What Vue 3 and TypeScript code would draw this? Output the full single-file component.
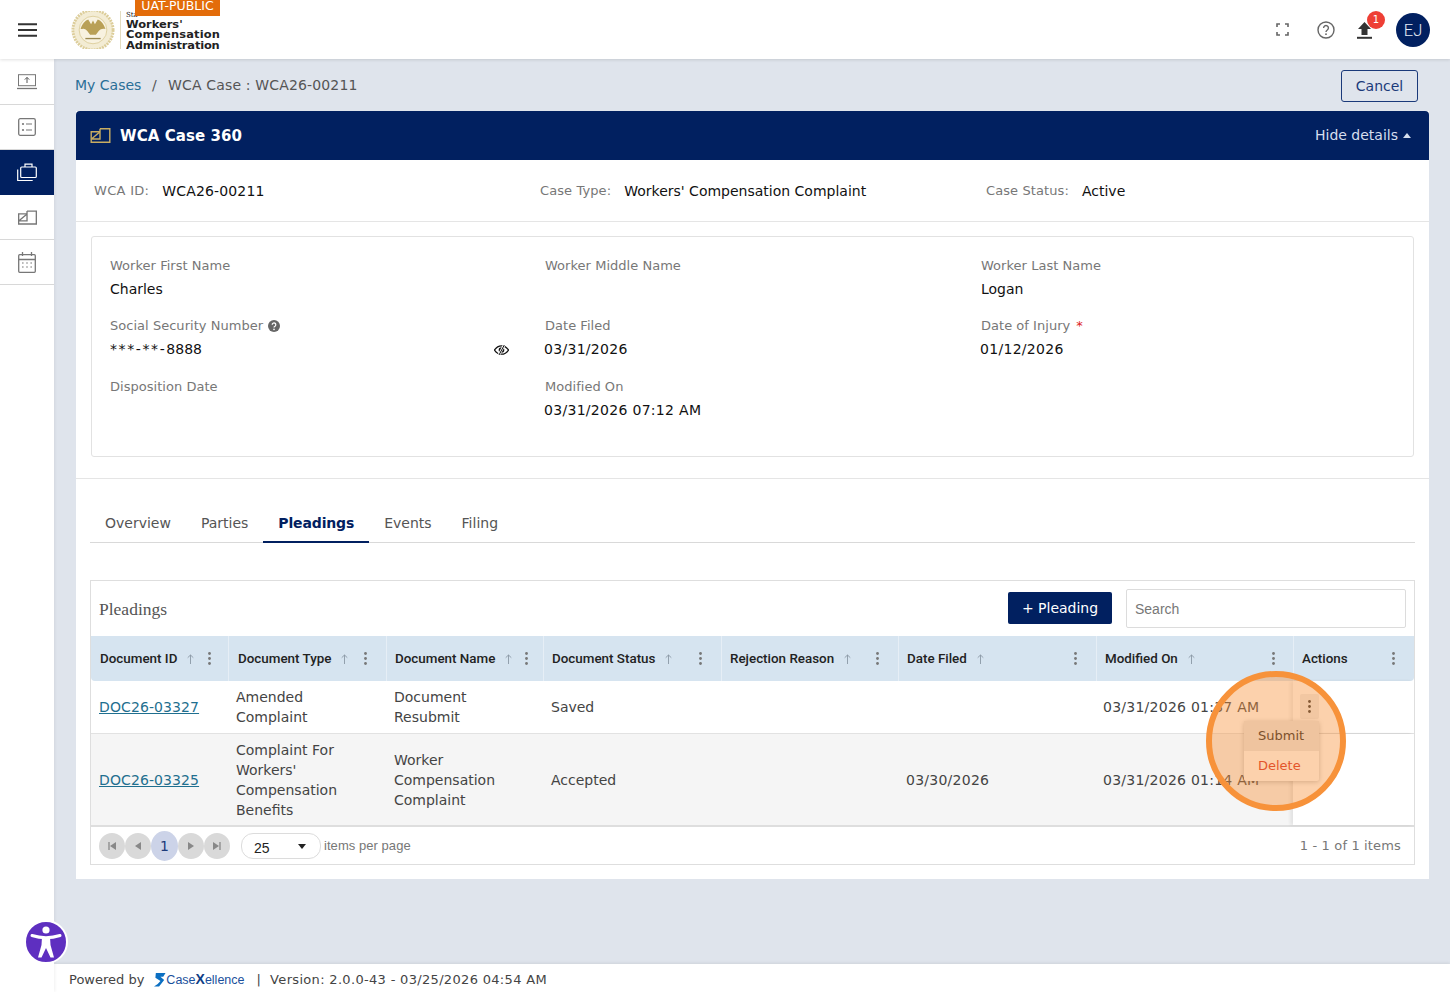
<script setup lang="ts">
const columns = [
  { label: 'Document ID', sort: true, pad: 17, left: 9 },
  { label: 'Document Type', sort: true, pad: 19, left: 9 },
  { label: 'Document Name', sort: true, pad: 15, left: 8 },
  { label: 'Document Status', sort: true, pad: 19, left: 8 },
  { label: 'Rejection Reason', sort: true, pad: 19, left: 8 },
  { label: 'Date Filed', sort: true, pad: 19, left: 8 },
  { label: 'Modified On', sort: true, pad: 18, left: 8 },
  { label: 'Actions', sort: false, pad: 19, left: 8 },
]
const rows = [
  { id: 'DOC26-03327', type: 'Amended Complaint', name: 'Document Resubmit', status: 'Saved', reason: '', filed: '', modified: '03/31/2026 01:37 AM', kebab: true },
  { id: 'DOC26-03325', type: "Complaint For Workers' Compensation Benefits", name: 'Worker Compensation Complaint', status: 'Accepted', reason: '', filed: '03/30/2026', modified: '03/31/2026 01:14 AM', kebab: false },
]
const tabs = ['Overview', 'Parties', 'Pleadings', 'Events', 'Filing']
const details = [
  { label: 'Worker First Name', value: 'Charles' },
  { label: 'Worker Middle Name', value: '' },
  { label: 'Worker Last Name', value: 'Logan' },
  { label: 'Social Security Number', mask: '***-**-', value: '8888', help: true, eye: true },
  { label: 'Date Filed', value: '03/31/2026', shift: true },
  { label: 'Date of Injury', value: '01/12/2026', req: true, shift: true },
  { label: 'Disposition Date', value: '' },
  { label: 'Modified On', value: '03/31/2026 07:12 AM', shift: true },
]
</script>

<template>
  <div class="app">
    <header class="topbar">
      <button class="burger" aria-label="Menu">
        <svg width="20" height="14" viewBox="0 0 20 14"><path d="M0 1.2h19M0 7h19M0 12.8h19" stroke="#333" stroke-width="2" /></svg>
      </button>
      <div class="logo">
        <svg class="seal" width="44" height="38" viewBox="0 0 46 40" preserveAspectRatio="none">
          <circle cx="23" cy="20" r="21" fill="#f3ecd4" stroke="#dccd9a" stroke-width="3" stroke-dasharray="2 1" />
          <circle cx="23" cy="20" r="14.500" fill="#f8f2e0" stroke="#d8c88f" stroke-width=".8" />
          <path d="M10 19c2-6 5-9 8-10l3 5 2-4 2 4 3-5c3 1 6 4 8 10-3-1-5 0-7 2l-3 4h-6l-3-4c-2-2-4-3-5-2z" fill="#b9a056" />
          <path d="M15 29h16" stroke="#9c8a52" stroke-width="1.4" />
        </svg>
        <span class="logo-rule"></span>
        <div class="logo-text">
          <span class="logo-state">Sta</span>
          <b class="l1">Workers'</b>
          <b class="l2">Compensation</b>
          <b class="l3">Administration</b>
        </div>
        <span class="env">UAT-PUBLIC</span>
      </div>
      <div class="top-actions">
        <svg class="ic-full" width="13" height="13" viewBox="0 0 13 13"><path d="M1 4V1h3M9 1h3v3M12 9v3H9M4 12H1V9" fill="none" stroke="#666" stroke-width="1.6" /></svg>
        <svg class="ic-help" width="18" height="18" viewBox="0 0 18 18"><circle cx="9" cy="9" r="8" fill="none" stroke="#666" stroke-width="1.4" /><path d="M6.6 7a2.4 2.4 0 1 1 3.7 2c-.9.6-1.3 1-1.3 2" fill="none" stroke="#666" stroke-width="1.4" /><circle cx="9" cy="13.2" r=".9" fill="#666" /></svg>
        <div class="upload">
          <svg width="15" height="17" viewBox="0 0 15 17"><path d="M7.5 0L14 7h-3.500v6h-6V7H1z" fill="#333" /><path d="M0 15.8h15" stroke="#333" stroke-width="2" /></svg>
          <span class="badge">1</span>
        </div>
        <div class="avatar">EJ</div>
      </div>
    </header>

    <div class="body">
      <nav class="sidebar">
        <a class="side-item">
          <svg width="20" height="16" viewBox="0 0 20 16"><rect x="1.5" y=".7" width="17" height="11" fill="none" stroke="#777" /><path d="M0 14.5h20" stroke="#777" stroke-width="1.3" /><path d="M10 9V3.5M7.8 5.6 10 3.4l2.2 2.2" fill="none" stroke="#555" /></svg>
        </a>
        <a class="side-item">
          <svg width="18" height="18" viewBox="0 0 18 18"><rect x=".7" y=".7" width="16.6" height="16.6" rx="1.5" fill="none" stroke="#777" stroke-width="1.3" /><circle cx="5" cy="6" r="1.1" fill="#777" /><circle cx="5" cy="12" r="1.1" fill="#777" /><path d="M8 6h6M8 12h6" stroke="#777" stroke-width="1.2" /></svg>
        </a>
        <a class="side-item active">
          <svg width="20" height="19" viewBox="0 0 20 19"><rect x="3.7" y="4" width="15.6" height="10.5" rx="1" fill="none" stroke="#fff" stroke-width="1.2" /><path d="M8 4V1.2h7V4M.7 6.5v11h15" fill="none" stroke="#fff" stroke-width="1.2" /></svg>
        </a>
        <a class="side-item">
          <svg width="19" height="15" viewBox="0 0 20 15"><path d="M9.500.7H19.300v13.600H.7V3.700h8.800" fill="none" stroke="#777" stroke-width="1.400" /><path d="M9.500.7V11H.7M9.500 3.700 1 11" fill="none" stroke="#777" stroke-width="1.400" /></svg>
        </a>
        <a class="side-item">
          <svg width="18" height="21" viewBox="0 0 18 21"><rect x=".7" y="2.7" width="16.6" height="17.6" rx="1" fill="none" stroke="#777" stroke-width="1.3" /><path d="M.7 7.5h16.6M4.5 0v4M13.5 0v4" stroke="#777" stroke-width="1.3" /><path d="M4 11h1.6M8.2 11h1.6M12.4 11h1.6M4 15h1.6M8.2 15h1.6M12.4 15h1.6" stroke="#777" stroke-width="1.2" /></svg>
        </a>
      </nav>

      <div class="content">
        <main class="main">
          <div class="crumbs">
            <div class="crumb-text">
              <a class="crumb-link">My Cases</a>
              <span class="crumb-sep">/</span>
              <span class="crumb-cur">WCA Case : WCA26-00211</span>
            </div>
            <button class="cancel">Cancel</button>
          </div>

          <section class="case">
            <div class="case-head">
              <svg width="21" height="15" viewBox="0 0 20 15"><path d="M9.500.7H19.300v13.600H.7V3.700h8.800" fill="none" stroke="#c9ad62" stroke-width="1.400" /><path d="M9.500.7V11H.7M9.500 3.700 1 11" fill="none" stroke="#c9ad62" stroke-width="1.400" /></svg>
              <h1>WCA Case 360</h1>
              <span class="hide">Hide details <i class="caret"></i></span>
            </div>

            <div class="summary">
              <div class="sum s1"><label>WCA ID:</label><span>WCA26-00211</span></div>
              <div class="sum s2"><label>Case Type:</label><span>Workers' Compensation Complaint</span></div>
              <div class="sum s3"><label>Case Status:</label><span>Active</span></div>
            </div>

            <div class="details-wrap">
              <div class="details">
                <div v-for="d in details" :key="d.label" class="field">
                  <div class="f-label">
                    {{ d.label }}
                    <svg v-if="d.help" class="help" width="12" height="12" viewBox="0 0 12 12"><circle cx="6" cy="6" r="6" fill="#666" /><path d="M4.2 4.7a1.8 1.8 0 1 1 2.8 1.5c-.7.4-1 .7-1 1.3" fill="none" stroke="#fff" stroke-width="1.2" /><circle cx="6" cy="9.4" r=".8" fill="#fff" /></svg>
                    <em v-if="d.req">*</em>
                  </div>
                  <div class="f-value" :class="{ shift: d.shift }">
                    <span v-if="d.mask" class="mask">{{ d.mask }}</span>{{ d.value }}
                    <svg v-if="d.eye" class="eye" width="15" height="12" viewBox="0 0 15 12"><path d="M.5 6C2.5 3 5 1.8 7.5 1.8S12.5 3 14.5 6c-2 3-4.500 4.200-7 4.200S2.500 9 .5 6z" fill="none" stroke="#111" stroke-width="1.300" /><circle cx="7.500" cy="6" r="2.800" fill="#111" /><path d="M10.500.5 4.500 11.500" stroke="#fff" stroke-width="2.500" /><path d="M10.300 1 5 11" stroke="#111" stroke-width="1" /></svg>
                  </div>
                </div>
              </div>
            </div>

            <div class="lower">
              <div class="tabs">
                <a v-for="t in tabs" :key="t" class="tab" :class="{ on: t === 'Pleadings' }">{{ t }}</a>
              </div>

              <div class="grid">
                <div class="toolbar">
                  <h2>Pleadings</h2>
                  <button class="add">+ Pleading</button>
                  <div class="search">Search</div>
                </div>

                <div class="row head">
                  <div v-for="c in columns" :key="c.label" class="th" :style="{ paddingLeft: c.left + 'px', paddingRight: c.pad + 'px' }">
                    <span class="th-label">{{ c.label }}</span>
                    <svg v-if="c.sort" class="sort" width="7" height="10" viewBox="0 0 7 10"><path d="M3.500 10V1M.7 3.700 3.500 1l2.800 2.700" fill="none" stroke="#8a97a5" stroke-width=".9" /></svg>
                    <svg class="kebab" width="3" height="13" viewBox="0 0 3 13"><circle cx="1.500" cy="1.500" r="1.400" fill="#777" /><circle cx="1.500" cy="6.500" r="1.400" fill="#777" /><circle cx="1.500" cy="11.500" r="1.400" fill="#777" /></svg>
                  </div>
                </div>

                <div v-for="(r, i) in rows" :key="r.id" class="row tr" :class="{ alt: i === 1 }">
                  <div class="td"><a class="doc">{{ r.id }}</a></div>
                  <div class="td">{{ r.type }}</div>
                  <div class="td">{{ r.name }}</div>
                  <div class="td">{{ r.status }}</div>
                  <div class="td">{{ r.reason }}</div>
                  <div class="td date">{{ r.filed }}</div>
                  <div class="td date nowrap">{{ r.modified }}</div>
                  <div class="td act">
                    <span v-if="r.kebab" class="act-btn">
                      <svg width="3" height="13" viewBox="0 0 3 13"><circle cx="1.500" cy="1.500" r="1.400" fill="#333" /><circle cx="1.500" cy="6.500" r="1.400" fill="#333" /><circle cx="1.500" cy="11.500" r="1.400" fill="#333" /></svg>
                    </span>
                    <div v-if="r.kebab" class="menu">
                      <div class="menu-item sel">Submit</div>
                      <div class="menu-item del">Delete</div>
                    </div>
                  </div>
                </div>

                <div class="pager">
                  <span class="pg"><svg width="8" height="8" viewBox="0 0 8 8"><path d="M1 0v8" stroke="#888" stroke-width="1.300" /><path d="M8 0v8L2 4z" fill="#888" /></svg></span>
                  <span class="pg"><svg width="6" height="8" viewBox="0 0 6 8"><path d="M6 0v8L0 4z" fill="#888" /></svg></span>
                  <span class="pg cur">1</span>
                  <span class="pg"><svg width="6" height="8" viewBox="0 0 6 8"><path d="M0 0v8l6-4z" fill="#888" /></svg></span>
                  <span class="pg"><svg width="8" height="8" viewBox="0 0 8 8"><path d="M7 0v8" stroke="#888" stroke-width="1.300" /><path d="M0 0v8l6-4z" fill="#888" /></svg></span>
                  <div class="size"><span>25</span><i></i></div>
                  <span class="per">items per page</span>
                  <span class="count">1 - 1 of 1 items</span>
                </div>
              </div>
            </div>
          </section>
        </main>

        <footer class="footer">
          <span class="pw">Powered by</span>
          <span class="cx">
            <svg width="12" height="15" viewBox="0 0 13 16"><path d="M2 1h10.500L10 5H7l4 3.500-5.500 7H0L4 13l3-3.500L1.500 6z" fill="#0b6fc2" /></svg>
            <span class="cx-t">Case<b>X</b>ellence</span>
          </span>
          <span class="ver">|&nbsp;&nbsp;Version: 2.0.0-43 - 03/25/2026 04:54 AM</span>
        </footer>
      </div>
    </div>

    <div class="spot" aria-hidden="true"></div>

    <button class="a11y" aria-label="Accessibility">
      <svg width="34" height="36" viewBox="0 0 34 36"><circle cx="17" cy="6" r="3.600" fill="#fff" /><path d="M3 11.500c5 1.600 9 2.200 14 2.200s9-.6 14-2.200" fill="none" stroke="#fff" stroke-width="3" stroke-linecap="round" /><path d="M13 13h8l.5 8L25 33.500h-3.500L17 24l-4.500 9.500H9L12.500 21z" fill="#fff" /></svg>
    </button>
  </div>
</template>

<style>
html, body { margin: 0; background: #fff; }
</style>

<style scoped>
* { box-sizing: border-box; }
.app {
  position: relative;
  display: flex;
  flex-direction: column;
  width: 1450px;
  height: 992px;
  overflow: hidden;
  font-family: "DejaVu Sans", sans-serif;
  font-size: 14px;
  color: #222;
}
.topbar {
  display: flex;
  align-items: center;
  flex: 0 0 59px;
  background: #fff;
  position: relative;
  z-index: 2;
  box-shadow: 0 1px 3px rgba(0, 0, 0, .12);
}
.burger { width: 54px; padding: 0 0 0 2px; background: none; border: 0; display: flex; justify-content: center; }
.logo { position: relative; display: flex; align-items: center; height: 59px; margin-left: 17px; width: 150px; }
.seal { flex: none; margin-top: 1px; }
.logo-rule { width: 1px; height: 38px; background: #e3dcc0; margin: 1px 5px 0 5px; }
.logo-text { display: flex; flex-direction: column; line-height: 10.500px; padding-top: 2px; color: #222; }
.logo-text b { font-size: 10.400px; font-weight: 700; white-space: nowrap; transform: scaleX(1.100); transform-origin: left center; }
.logo-text .l2 { letter-spacing: .15px; }
.logo-text .l3 { letter-spacing: -.15px; }
.logo-state { font: 7px/8px "DejaVu Serif", serif; white-space: nowrap; }
.env {
  position: absolute;
  left: 64px;
  top: 0;
  width: 85px;
  height: 16px;
  background: #e36c0a;
  color: #fff;
  text-align: center;
  font-size: 12.500px;
  line-height: 12px;
}
.top-actions { margin-left: auto; display: flex; align-items: center; padding-right: 20px; }
.ic-full { margin-right: 28px; }
.ic-help { margin-right: 22px; }
.upload { position: relative; width: 15px; height: 17px; margin-right: 24px; margin-top: 2px; }
.upload svg { display: block; }
.badge {
  position: absolute;
  left: 10px;
  top: -11px;
  width: 18px;
  height: 18px;
  border-radius: 50%;
  background: #ee3f35;
  color: #fff;
  font-size: 10px;
  line-height: 18px;
  text-align: center;
}
.avatar {
  width: 34px;
  height: 34px;
  border-radius: 50%;
  background: #012060;
  color: #e4eaf5;
  font: 300 16.500px/35px Roboto, sans-serif;
  text-align: center;
}
.body { flex: 1; display: flex; min-height: 0; }
.sidebar {
  flex: 0 0 54px;
  background: #fff;
  padding-top: 1px;
  box-shadow: 1px 0 3px rgba(0, 0, 0, .06);
  position: relative;
  z-index: 1;
}
.side-item {
  display: flex;
  align-items: center;
  justify-content: center;
  height: 45px;
  border-bottom: 1px solid #d8d8d8;
}
.side-item.active { background: #012060; border-bottom-color: #012060; }
.content { flex: 1; display: flex; flex-direction: column; min-width: 0; }
.main { flex: 1; background: #dfe4ec; padding: 0 21px 0 22px; min-height: 0; }
.crumbs { display: flex; align-items: flex-start; justify-content: space-between; height: 52px; padding: 11px 11px 0 0; margin-left: -1px; }
.crumb-text { color: #555; font-size: 14px; line-height: 30px; }
.crumb-cur { letter-spacing: .15px; margin-left: 1px; }
.crumb-link { color: #2a6f97; }
.crumb-sep { margin: 0 10.500px; }
.cancel {
  width: 77px;
  height: 32px;
  background: transparent;
  border: 1px solid #1b3a7a;
  border-radius: 3px;
  color: #1b3a7a;
  font: 14px "DejaVu Sans", sans-serif;
}
.case { background: #fff; }
.case-head {
  display: flex;
  align-items: center;
  height: 49px;
  padding: 0 18px 0 14px;
  background: #012060;
  border-radius: 4px 4px 0 0;
  color: #fff;
}
.case-head h1 { margin: 0 0 0 9px; font-size: 15px; font-weight: 700; letter-spacing: .08px; }
.hide { margin-left: auto; color: #d5deee; font-size: 14px; display: flex; align-items: center; gap: 5px; margin-top: -1px; }
.caret { width: 0; height: 0; border: 4px solid transparent; border-top: 0; border-bottom: 5px solid #d5deee; }
.summary { display: grid; grid-template-columns: 446px 446px 1fr; height: 62px; align-items: center; border-bottom: 1px solid #e5e5e5; padding: 0 0 0 18px; }
.sum { display: flex; align-items: baseline; gap: 13px; }
.sum label { color: #777; font-size: 13px; position: relative; top: -1px; }
.s1 label { letter-spacing: .3px; }
.s1 span { letter-spacing: .15px; }
.s2 label { letter-spacing: .1px; }
.s3 label { letter-spacing: .1px; }
.sum span { color: #111; }
.details-wrap { padding: 14px 15px 21px; border-bottom: 1px solid #e5e5e5; }
.details {
  display: grid;
  grid-template-columns: 435px 436px 1fr;
  grid-template-rows: 60px 61px 60px;
  height: 221px;
  padding: 20px 18px 0;
  border: 1px solid #e2e2e2;
  border-radius: 3px;
}
.f-label { color: #777; font-size: 13px; height: 17px; white-space: nowrap; display: flex; align-items: center; gap: 5px; letter-spacing: .03px; }
.f-label em { color: #d22; font-style: normal; margin-left: 1px; }
.f-value { position: relative; margin-top: 5px; color: #111; height: 20px; line-height: 20px; }
.f-value.shift { margin-left: -1px; letter-spacing: .3px; }
.mask { letter-spacing: 1.600px; }
.eye { position: absolute; left: 384px; top: 5px; }
.lower { padding: 27px 14px 14px; }
.tabs { display: flex; height: 37px; border-bottom: 1px solid #d9d9d9; margin-bottom: 37px; }
.tab { padding: 0 15px; color: #555; line-height: 34px; height: 37px; }
.tab.on { color: #012060; font-weight: 700; border-bottom: 2px solid #012060; letter-spacing: -.15px; }
.grid { border: 1px solid #dedede; width: 1325px; }
.toolbar { display: flex; align-items: center; height: 55px; padding: 0 8px; }
.toolbar h2 { margin: 1px auto 0 0; font: 400 17.500px "Liberation Serif", serif; color: #555; }
.add {
  width: 104px;
  height: 32px;
  margin-right: 14px;
  margin-top: -2px;
  background: #012060;
  border: 0;
  border-radius: 2px;
  color: #fff;
  font: 14px "DejaVu Sans", sans-serif;
}
.search {
  width: 280px;
  height: 39px;
  padding-left: 8px;
  border: 1px solid #dcdcdc;
  border-radius: 2px;
  color: #777;
  font: 14px/39px "Liberation Sans", sans-serif;
}
.row { display: grid; grid-template-columns: 137px 158px 157px 178px 177px 198px 197px 121px; }
.head { height: 45px; background: #d6e4f0; border-radius: 0 0 4px 4px; }
.th {
  display: flex;
  align-items: center;
  border-left: 1px solid #e6eef6;
  font: 500 13.400px Roboto, "Liberation Sans", sans-serif;
  color: #222;
}
.th:first-child { border-left: 0; }
.th-label { white-space: nowrap; }
.sort { flex: none; margin-left: 10px; }
.kebab { flex: none; margin-left: auto; }
.tr { background: #fff; border-bottom: 1px solid #e2e2e2; height: 53px; }
.tr.alt { background: #f5f5f5; height: 93px; border-bottom: 2px solid #dedede; }
.td { display: flex; align-items: center; padding: 0 8px; line-height: 20px; color: #444; font-size: 14px; }
.td.nowrap { white-space: nowrap; padding-left: 7px; }
.td.date { letter-spacing: .25px; }
.act { position: relative; background: #fff; box-shadow: -3px 0 3px rgba(0, 0, 0, .07); }
.doc { color: #1f6f8f; text-decoration: underline; letter-spacing: .1px; }
.act-btn {
  position: absolute;
  left: 7px;
  top: 13px;
  width: 19px;
  height: 25px;
  border-radius: 2px;
  background: #eee;
  display: flex;
  align-items: center;
  justify-content: center;
}
.menu {
  position: absolute;
  left: -49px;
  top: 40px;
  width: 75px;
  background: #fff;
  border-radius: 2px;
  box-shadow: 0 1px 5px rgba(0, 0, 0, .25);
  z-index: 3;
  font-size: 13px;
}
.menu-item { height: 30px; line-height: 30px; padding-left: 14px; color: #222; }
.menu-item.sel { background: #e8e8e8; }
.menu-item.del { color: #d42a1e; }
.pager { display: flex; align-items: center; height: 37px; padding-left: 8px; }
.pg {
  display: flex;
  align-items: center;
  justify-content: center;
  width: 26px;
  height: 26px;
  border-radius: 50%;
  background: #d9d9d9;
}
.pg.cur {
  width: 27px;
  height: 30px;
  background: #ccd3e8;
  color: #1b3a7a;
  font-size: 14px;
  z-index: 1;
}
.size {
  display: flex;
  align-items: center;
  justify-content: space-between;
  width: 80px;
  height: 26px;
  margin-left: 11px;
  padding: 4px 14px 0 12px;
  border: 1px solid #dcdcdc;
  border-radius: 12px;
  font: 14px "Liberation Sans", sans-serif;
  color: #222;
}
.size i { width: 0; height: 0; border: 4px solid transparent; border-bottom: 0; border-top: 5px solid #222; margin-top: -3px; }
.per { margin-left: 3px; font: 13px "Liberation Sans", sans-serif; color: #777; letter-spacing: .05px; }
.count { margin-left: auto; margin-right: 13px; font-size: 13px; color: #777; letter-spacing: .15px; }
.footer {
  flex: 0 0 28px;
  display: flex;
  align-items: center;
  padding: 2px 0 0 15px;
  background: #fff;
  color: #444;
  font-size: 13px;
  box-shadow: 0 -1px 3px rgba(0, 0, 0, .08);
}
.cx { display: inline-flex; align-items: center; margin: 0 12px 0 10px; }
.cx-t { font: 12.500px "Liberation Sans", sans-serif; color: #1a4f9c; }
.cx-t b { color: #0f3d85; font-size: 14px; }
.ver { letter-spacing: .32px; }
.spot {
  position: absolute;
  left: 1206px;
  top: 671px;
  width: 140px;
  height: 140px;
  border: 6px solid #f7923a;
  border-radius: 50%;
  background: rgba(248, 146, 58, .42);
  z-index: 5;
}
.a11y {
  position: absolute;
  left: 24px;
  top: 920px;
  width: 44px;
  height: 44px;
  padding: 0;
  border: 2px solid #fff;
  border-radius: 50%;
  background: #5e2fc0;
  display: flex;
  align-items: center;
  justify-content: center;
  z-index: 5;
}
</style>
